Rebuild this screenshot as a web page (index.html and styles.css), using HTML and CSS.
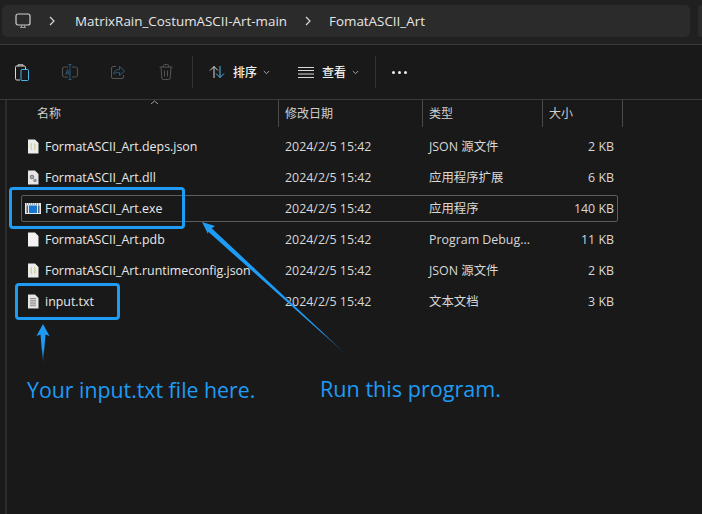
FILE: index.html
```html
<!DOCTYPE html>
<html lang="en">
<head>
    <meta charset="UTF-8">
    <title>FomatASCII_Art</title>
    <link rel="stylesheet" href="styles.css">
</head>
<body>

    <div class="window">
        <div class="topbar">
            <div class="addressbar">
                <svg class="pc-icon" width="16" height="16" viewBox="0 0 16 16" fill="none" stroke="#cfcfcf" stroke-width="1.2">
                    <rect x="1" y="1" width="14" height="11" rx="2"/>
                    <path d="M5 14.500h6M6.500 12v2M9.500 12v2" stroke="#9a9a9a"/>
                </svg>
                <svg class="crumb-sep sep-first" width="8" height="10" viewBox="0 0 8 10" fill="none" stroke="#d8d8d8" stroke-width="1.2"><path d="M2 1l4 4-4 4"/></svg>
                <span class="crumb">MatrixRain_CostumASCII-Art-main</span>
                <svg class="crumb-sep" width="8" height="10" viewBox="0 0 8 10" fill="none" stroke="#d8d8d8" stroke-width="1.2"><path d="M2 1l4 4-4 4"/></svg>
                <span class="crumb">FomatASCII_Art</span>
            </div>
            <div class="searchbar"></div>
        </div>

        <div class="toolbar">
            <div class="tool-group">
                <svg width="14" height="17" viewBox="0 0 14 17" fill="none" stroke-width="1">
                    <path d="M5 16H1.800A1.300 1.300 0 0 1 .5 14.700V3.300A1.300 1.300 0 0 1 1.800 2h7.400a1.300 1.300 0 0 1 1.300 1.300V5" stroke="#d8d8d8"/>
                    <path d="M3 2V.8h5V2" stroke="#d8d8d8"/>
                    <rect x="6" y="5.500" width="7.500" height="11" rx="1" stroke="#4fb4f0"/>
                </svg>
                <svg width="16" height="16" viewBox="0 0 16 16" fill="none" stroke-width="1">
                    <path d="M6 3H2.500A2 2 0 0 0 .5 5v6a2 2 0 0 0 2 2H6M10 3h3.500a2 2 0 0 1 2 2v6a2 2 0 0 1-2 2H10" stroke="#555"/>
                    <path d="M8 .5v15M6.500 .5h3M6.500 15.500h3M3.800 10.800L5.500 5.500l1.700 5.300M4.300 9h2.400" stroke="#2c5a7a"/>
                </svg>
                <svg width="14" height="14" viewBox="0 0 14 14" fill="none" stroke-width="1">
                    <path d="M5 1.500H2A1.500 1.500 0 0 0 .5 3v9A1.500 1.500 0 0 0 2 13.500h9a1.500 1.500 0 0 0 1.500-1.500v-2" stroke="#555"/>
                    <path d="M2.500 9c.5-3 2.500-4.500 6-4.500V1.500l5 4.500-5 4.500V7.500c-2.500 0-4.500.3-6 1.500z" stroke="#2c5a7a"/>
                </svg>
                <svg class="trash" width="14" height="16" viewBox="0 0 14 16" fill="none" stroke="#555" stroke-width="1">
                    <path d="M.5 3h13M4.500 3V1.500a1 1 0 0 1 1-1h3a1 1 0 0 1 1 1V3M2 3l.8 11a1.500 1.500 0 0 0 1.500 1.500h5.400a1.500 1.500 0 0 0 1.500-1.500L12 3M5.500 6.500v6M8.500 6.500v6"/>
                </svg>
            </div>
            <div class="tool-divider"></div>
            <div class="tool-btn sort-btn">
                <svg width="16" height="14" viewBox="0 0 16 14" fill="none" stroke-width="1">
                    <path d="M5 13V1.500M1 5.500l4-4 4 4" stroke="#d8d8d8"/>
                    <path d="M11 1v11.500M7 8.500l4 4 4-4" stroke="#4fb4f0"/>
                </svg>
                <span class="tool-label">排序</span>
                <svg width="7" height="5" viewBox="0 0 7 5" fill="none" stroke="#a8a8a8" stroke-width="1"><path d="M.8 1l2.700 2.700L6.200 1"/></svg>
            </div>
            <div class="tool-btn view-btn">
                <svg width="16" height="11" viewBox="0 0 16 11" fill="none" stroke="#d8d8d8" stroke-width="1"><path d="M0 .5h16M0 3.500h16M0 7h16M0 10.500h16"/></svg>
                <span class="tool-label">查看</span>
                <svg width="7" height="5" viewBox="0 0 7 5" fill="none" stroke="#a8a8a8" stroke-width="1"><path d="M.8 1l2.700 2.700L6.200 1"/></svg>
            </div>
            <div class="tool-divider"></div>
            <div class="more">
                <span class="dot"></span><span class="dot"></span><span class="dot"></span>
            </div>
        </div>

        <div class="listing">
            <div class="columns">
                <div class="col-head col-name">名称
                    <svg class="sort-mark" width="9" height="5" viewBox="0 0 9 5" fill="none" stroke="#a0a0a0" stroke-width="1"><path d="M1 4l3.500-3L8 4"/></svg>
                </div>
                <div class="col-head">修改日期</div>
                <div class="col-head">类型</div>
                <div class="col-head">大小</div>
            </div>

            <div class="rows">
                <div class="file-row">
                    <div class="file-name">
                        <svg class="file-icon" width="12" height="15" viewBox="0 0 12 15"><path d="M1 .5h7l3.500 3.500v10.500H1z" fill="#ececec"/><path d="M5 4.500c-1 0-.8 1-.8 2s-.4 1-.4 1 .4 0 .4 1-.2 2 .8 2M7 4.500c1 0 .8 1 .8 2s.4 1 .4 1-.4 0-.4 1 .2 2-.8 2" fill="none" stroke="#b6bb5a" stroke-width=".8"/></svg>
                        <span>FormatASCII_Art.deps.json</span>
                    </div>
                    <div class="file-cell">2024/2/5 15:42</div><div class="file-cell file-type">JSON 源文件</div><div class="file-size">2 KB</div>
                </div>
                <div class="file-row">
                    <div class="file-name">
                        <svg class="file-icon" width="12" height="15" viewBox="0 0 12 15"><path d="M1 .5h7l3.500 3.500v10.500H1z" fill="#e6e6e6"/><circle cx="5" cy="7" r="2.300" fill="#7d8288"/><circle cx="8" cy="10.500" r="1.800" fill="#8f9499"/><circle cx="5" cy="7" r=".8" fill="#e6e6e6"/></svg>
                        <span>FormatASCII_Art.dll</span>
                    </div>
                    <div class="file-cell">2024/2/5 15:42</div><div class="file-cell file-type">应用程序扩展</div><div class="file-size">6 KB</div>
                </div>
                <div class="file-row selected">
                    <div class="file-name">
                        <svg class="file-icon exe-icon" width="16" height="11" viewBox="0 0 16 11"><rect width="16" height="11" fill="#e4e8ec"/><path d="M1 1h14" stroke="#59626b" stroke-dasharray="1 1"/><rect x="4" y="2.500" width="8" height="7.500" fill="#1677d2"/><rect x="13" y="2.500" width="1.500" height="7.500" fill="#59626b"/><rect x="1.500" y="2.500" width="1.500" height="7.500" fill="#59626b"/></svg>
                        <span>FormatASCII_Art.exe</span>
                    </div>
                    <div class="file-cell">2024/2/5 15:42</div><div class="file-cell file-type">应用程序</div><div class="file-size">140 KB</div>
                </div>
                <div class="file-row">
                    <div class="file-name">
                        <svg class="file-icon" width="12" height="15" viewBox="0 0 12 15"><path d="M1 .5h7l3.500 3.500v10.500H1z" fill="#f2f2f2"/></svg>
                        <span>FormatASCII_Art.pdb</span>
                    </div>
                    <div class="file-cell">2024/2/5 15:42</div><div class="file-cell">Program Debug...</div><div class="file-size">11 KB</div>
                </div>
                <div class="file-row">
                    <div class="file-name">
                        <svg class="file-icon" width="12" height="15" viewBox="0 0 12 15"><path d="M1 .5h7l3.500 3.500v10.500H1z" fill="#ececec"/><path d="M5 4.500c-1 0-.8 1-.8 2s-.4 1-.4 1 .4 0 .4 1-.2 2 .8 2M7 4.500c1 0 .8 1 .8 2s.4 1 .4 1-.4 0-.4 1 .2 2-.8 2" fill="none" stroke="#b6bb5a" stroke-width=".8"/></svg>
                        <span>FormatASCII_Art.runtimeconfig.json</span>
                    </div>
                    <div class="file-cell">2024/2/5 15:42</div><div class="file-cell file-type">JSON 源文件</div><div class="file-size">2 KB</div>
                </div>
                <div class="file-row">
                    <div class="file-name">
                        <svg class="file-icon" width="12" height="15" viewBox="0 0 12 15"><path d="M1 .5h7l3.500 3.500v10.500H1z" fill="#e4e4e4"/><path d="M3 4.500h6M3 6.300h6M3 8.100h6M3 9.900h6M3 11.700h6" stroke="#777" stroke-width=".8"/></svg>
                        <span>input.txt</span>
                    </div>
                    <div class="file-cell">2024/2/5 15:42</div><div class="file-cell file-type">文本文档</div><div class="file-size">3 KB</div>
                </div>
            </div>
        </div>
    </div>

    <!-- annotations drawn on top of the screenshot -->
    <div class="mark mark-exe"></div>
    <div class="mark mark-input"></div>
    <svg class="arrows" width="702" height="514" viewBox="0 0 702 514">
        <defs>
            <linearGradient id="tail-long" gradientUnits="userSpaceOnUse" x1="208" y1="228" x2="350" y2="358">
                <stop offset="0" stop-color="#1e9bf5"/>
                <stop offset=".8" stop-color="#1e9bf5"/>
                <stop offset="1" stop-color="#1e9bf5" stop-opacity="0"/>
            </linearGradient>
            <linearGradient id="tail-short" gradientUnits="userSpaceOnUse" x1="43" y1="325" x2="43" y2="364">
                <stop offset=".6" stop-color="#1e9bf5"/>
                <stop offset="1" stop-color="#1e9bf5" stop-opacity="0"/>
            </linearGradient>
        </defs>
        <path d="M202 222L215 226 211.700 228.200 350 358 208.300 231.800 208 234z" fill="url(#tail-long)"/>
        <path d="M43 324L49.500 336 45.500 334.500 43 364 40.500 334.500 36.500 336z" fill="url(#tail-short)"/>
    </svg>
    <div class="note note-input">Your input.txt file here.</div>
    <div class="note note-run">Run this program.</div>

</body>
</html>
```

FILE: styles.css
```css
body {
    margin: 0;
    width: 702px;
    height: 514px;
    overflow: hidden;
    background-color: #191919;
    color: #e4e4e4;
    font-family: 'Open Sans', 'Noto Sans CJK SC', sans-serif;
    font-size: 12.4px;
    position: relative;
}
.window {
    display: flex;
    flex-direction: column;
    height: 100%;
}
.topbar {
    display: flex;
    gap: 8px;
    height: 44px;
    box-sizing: border-box;
    padding: 5px 0 7px 2px;
    background-color: #202020;
}
.addressbar {
    width: 688px;
    background-color: #2b2b2b;
    border-radius: 5px;
    display: flex;
    align-items: center;
    padding-left: 13px;
    box-sizing: border-box;
    color: #e6e6e6;
    font-size: 13.4px;
}
.searchbar {
    flex: 1;
    background-color: #2b2b2b;
    border-radius: 5px 0 0 5px;
}
.pc-icon {
    margin-right: 17px;
}
.crumb-sep {
    margin-right: 17px;
}
.sep-first {
    margin-right: 19px;
}
.crumb {
    margin-right: 17px;
}
.toolbar {
    height: 56px;
    box-sizing: border-box;
    border-top: 1px solid #3a3a3a;
    border-bottom: 1px solid #3a3a3a;
    display: flex;
    align-items: center;
    padding-left: 15px;
}
.tool-group {
    display: flex;
    align-items: center;
    gap: 33px;
}
.trash {
    margin-left: 1px;
}
.tool-divider {
    width: 1px;
    height: 32px;
    background-color: #333;
}
.tool-group + .tool-divider {
    margin-left: 19px;
}
.tool-btn {
    display: flex;
    align-items: center;
}
.sort-btn {
    margin-left: 16px;
}
.view-btn {
    margin-left: 28px;
}
.view-btn + .tool-divider {
    margin-left: 16px;
}
.tool-label {
    margin: 0 6px 0 8px;
    font-size: 12px;
    font-weight: 500;
    color: #eee;
}
.more {
    display: flex;
    gap: 3px;
    margin-left: 16px;
}
.dot {
    width: 3px;
    height: 3px;
    background-color: #eee;
    border-radius: 50%;
}
.listing {
    flex: 1;
    border-left: 2px solid #2c2c2c;
    margin-left: 5px;
}
.columns {
    display: grid;
    grid-template-columns: 272px 144px 120px 80px;
    height: 27px;
}
.col-head {
    padding-left: 6px;
    border-right: 1px solid #4a4a4a;
    line-height: 27px;
    font-size: 12px;
    color: #cfcfcf;
    position: relative;
}
.col-name {
    padding-left: 30px;
}
.sort-mark {
    position: absolute;
    left: 143px;
    top: 0;
}
.rows {
    display: flex;
    flex-direction: column;
    gap: 4px;
    padding: 6px 0 0 14px;
}
.file-row {
    display: grid;
    grid-template-columns: 257px 144px 120px 74px;
    width: 597px;
    height: 27px;
    box-sizing: border-box;
    align-items: center;
    color: #d8d8d8;
    border: 1px solid transparent;
    border-radius: 2px;
}
.file-cell {
    padding-left: 6px;
}
.file-type {
    padding-bottom: 2px;
}
.file-name {
    display: flex;
    align-items: center;
    color: #e8e8e8;
}
.file-icon {
    margin-left: 5px;
    margin-right: 6px;
}
.exe-icon {
    margin-left: 3px;
    margin-right: 4px;
}
.file-size {
    text-align: right;
    padding-right: 3px;
}
.selected {
    border-color: #5c5c5c;
}
.mark {
    position: absolute;
    border: 3px solid #1e9bf5;
    border-radius: 4px;
    box-sizing: border-box;
}
.mark-exe {
    left: 9px;
    top: 187px;
    width: 176px;
    height: 42px;
}
.mark-input {
    left: 15px;
    top: 283px;
    width: 105px;
    height: 37px;
}
.arrows {
    position: absolute;
    left: 0;
    top: 0;
}
.note {
    position: absolute;
    color: #1e9bf5;
    line-height: 28px;
    white-space: nowrap;
}
.note-input {
    left: 27px;
    top: 376px;
    font-size: 21.3px;
}
.note-run {
    left: 320px;
    top: 375px;
    font-size: 21.6px;
}
```
